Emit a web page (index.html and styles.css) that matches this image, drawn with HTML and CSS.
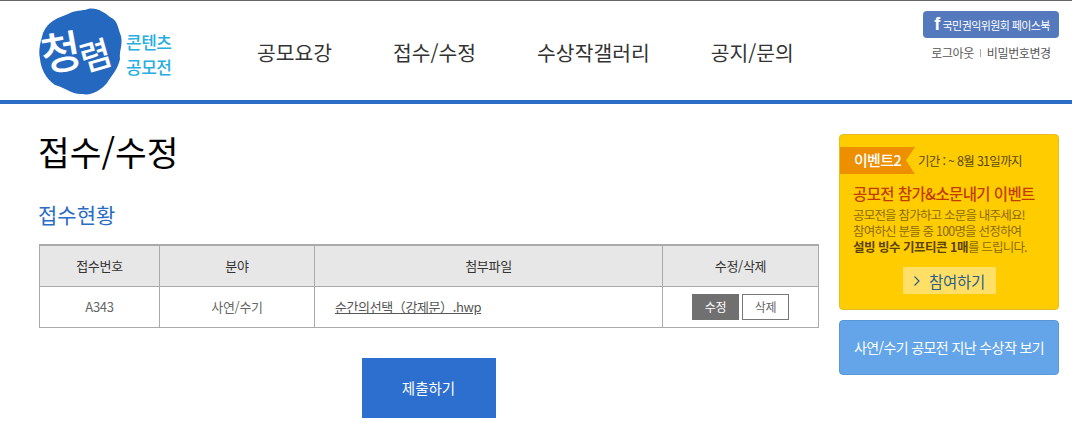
FILE: index.html
```html
<!DOCTYPE html>
<html lang="ko">
<head>
  <meta charset="UTF-8">
  <title>접수/수정</title>
  <link rel="stylesheet" href="styles.css">
</head>
<body>
  <header class="site-header">
    <a class="logo">
      <svg width="150" height="92" viewBox="0 0 150 92">
        <path d="M50 2 C58 0 66 5 72 10 C80 13 80 22 83 29 C85 38 81 44 82 52 C80 62 74 68 69 76 C62 84 53 89 44 87 C35 88 26 80 17 78 C8 72 3 62 2 52 C0 42 3 34 5 26 C10 14 20 11 30 7 C37 3 44 4 50 2 Z" fill="#2468c0"/>
        <text class="logo-big" x="6" y="65" transform="rotate(-10 6 65)">청</text>
        <text class="logo-small" x="46" y="65" transform="rotate(-16 46 65)">렴</text>
        <text class="logo-sub" x="88" y="42">콘텐츠</text>
        <text class="logo-sub" x="88" y="67">공모전</text>
      </svg>
    </a>
    <nav class="main-nav">
      <a>공모요강</a>
      <a>접수/수정</a>
      <a>수상작갤러리</a>
      <a>공지/문의</a>
    </nav>
    <div class="util">
      <a class="fb-btn"><span class="fb-f">f</span>국민권익위원회 페이스북</a>
      <div class="util-links"><a>로그아웃</a><i></i><a>비밀번호변경</a></div>
    </div>
  </header>

  <div class="wrap">
    <main class="content">
      <h1>접수/수정</h1>
      <h2>접수현황</h2>
      <table class="list">
        <colgroup>
          <col class="c1"><col class="c2"><col class="c3"><col class="c4">
        </colgroup>
        <thead>
          <tr><th>접수번호</th><th>분야</th><th>첨부파일</th><th>수정/삭제</th></tr>
        </thead>
        <tbody>
          <tr>
            <td>A343</td>
            <td>사연/수기</td>
            <td class="file"><a>순간의선택（강제문）.hwp</a></td>
            <td class="btns"><a class="btn-edit">수정</a><a class="btn-del">삭제</a></td>
          </tr>
        </tbody>
      </table>
      <div class="submit-row"><a class="btn-submit">제출하기</a></div>
    </main>

    <aside class="side">
      <div class="event">
        <div class="event-top">
          <span class="event-tag">이벤트2</span>
          <span class="event-date">기간 : ~ 8월 31일까지</span>
        </div>
        <h3>공모전 참가&amp;소문내기 이벤트</h3>
        <p>공모전을 참가하고 소문을 내주세요!<br>참여하신 분들 중 100명을 선정하여<br><b>설빙 빙수 기프티콘 1매</b>를 드립니다.</p>
        <a class="event-btn"><svg width="8" height="12" viewBox="0 0 8 12"><path d="M1.5 1.5 L6 6 L1.5 10.5" fill="none" stroke="#2b5f8a" stroke-width="1.2"/></svg>참여하기</a>
      </div>
      <a class="past">사연/수기 공모전 지난 수상작 보기</a>
    </aside>
  </div>
</body>
</html>
```

FILE: styles.css
```css
/* Basic Reset */
* { margin: 0; padding: 0; box-sizing: border-box; }
html, body { height: 436px; overflow: hidden; }
body { font-family: "Noto Sans CJK KR", "Noto Sans", sans-serif; background: #fff; color: #333; }

/* Header */
.site-header { display: flex; height: 104px; border-top: 1px solid #666; border-bottom: 4px solid #2b6cc4; padding-left: 38px; }
.logo { display: block; width: 150px; height: 92px; margin-top: 6px; }
.logo-big { font-size: 44px; font-weight: 500; fill: #fff; }
.logo-small { font-size: 34px; font-weight: 500; fill: #fff; }
.logo-sub { font-size: 17px; font-weight: 500; fill: #27aee0; letter-spacing: -0.5px; }
.main-nav { display: flex; gap: 61px; margin-left: 69px; padding-top: 36px; font-size: 20.4px; line-height: 30px; color: #333; }
.util { margin-left: auto; width: 136px; margin-right: 13px; padding-top: 10px; text-align: center; }
.fb-btn { display: flex; align-items: center; justify-content: center; height: 27px; padding-left: 2px; background: #5579bd; border-radius: 4px; color: #fff; font-size: 11px; letter-spacing: -0.6px; }
.fb-f { font-family: "Liberation Sans", sans-serif; font-weight: 700; font-size: 18px; margin-right: 3px; }
.util-links { display: flex; align-items: center; justify-content: center; gap: 6px; margin-top: 6px; font-size: 12px; letter-spacing: -0.4px; color: #555; line-height: 18px; }
.util-links i { width: 1px; height: 8px; background: #aaa; }

/* Layout */
.wrap { display: flex; padding: 27px 13px 0 39px; }
.content { width: 780px; }
.side { width: 220px; margin-left: 20px; margin-top: 3px; }

h1 { font-size: 34.5px; font-weight: 400; color: #000; line-height: 40px; margin-left: -1px; }
h2 { font-size: 21px; font-weight: 400; color: #2b6cc4; line-height: 30px; margin-top: 28px; margin-left: -1px; }

/* Table */
.list { width: 779px; margin-top: 15px; border-collapse: collapse; table-layout: fixed; border-top: 2px solid #aaa; font-size: 13px; letter-spacing: -0.3px; }
.c1 { width: 120px; }
.c2 { width: 155px; }
.c3 { width: 348px; }
.c4 { width: 156px; }
.list th, .list td { border: 1px solid #aaa; text-align: center; font-weight: 400; }
.list th { height: 41px; background: #e7e7e7; color: #333; }
.list td { height: 41px; color: #666; }
.list .file { text-align: left; padding-left: 20px; letter-spacing: -0.4px; }
.file a { color: #555; text-decoration: underline; }
.btns a { display: inline-block; width: 47px; height: 26px; line-height: 24px; font-size: 12px; vertical-align: middle; }
.btn-edit { background: #707070; color: #fff; border: 1px solid #707070; margin-right: 3px; }
.btn-del { background: #fff; color: #666; border: 1px solid #777; }

.submit-row { display: flex; justify-content: center; margin-top: 30px; padding-right: 1px; }
.btn-submit { width: 134px; height: 60px; line-height: 60px; background: #2d6fcf; color: #fff; text-align: center; font-size: 14.5px; }

/* Sidebar */
.event { height: 176px; background: #fc0; border: 1px solid #e6bd20; border-radius: 4px; padding-top: 12px; color: #8a6a10; }
.event-top { display: flex; align-items: center; height: 27px; }
.event-tag { width: 75px; height: 27px; line-height: 26px; padding-left: 14px; background: #ee8f00; color: #fff; font-size: 15px; font-weight: 500; letter-spacing: -0.7px; clip-path: polygon(0 0, 100% 0, 88% 50%, 100% 100%, 0 100%); }
.event-date { margin-left: 3px; font-size: 12.5px; letter-spacing: -0.7px; color: #5a4a10; }
.event h3 { margin: 8px 0 0 13px; font-size: 15.5px; font-weight: 500; line-height: 22px; letter-spacing: -0.6px; color: #c23c00; }
.event p { margin: 3px 0 0 13px; font-size: 12.5px; line-height: 16px; letter-spacing: -0.8px; white-space: nowrap; color: #8a6a10; }
.event p b { color: #5a4210; letter-spacing: -0.5px; }
.event-btn { display: flex; align-items: center; justify-content: center; gap: 8px; width: 93px; height: 27px; margin: 12px auto 0; background: #ffdf66; color: #2b5f8a; font-size: 15.5px; letter-spacing: -0.3px; }
.past { display: block; height: 55px; margin-top: 10px; line-height: 53px; text-align: center; background: #64a5ea; border: 1px solid #5b97d8; border-radius: 4px; color: #fff; font-size: 14px; letter-spacing: -0.6px; }
```
